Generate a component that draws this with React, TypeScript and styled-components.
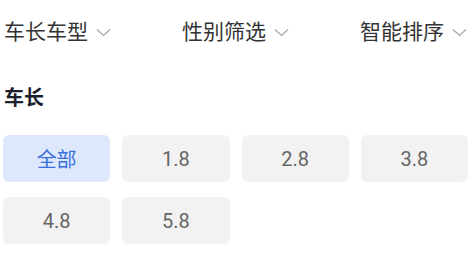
import React from 'react';
import styled, { createGlobalStyle } from 'styled-components';

const GlobalStyle = createGlobalStyle`
    body {
        margin: 0;
        background: #ffffff;
        font-family: Roboto, "Noto Sans CJK SC", sans-serif;
    }
`;

const Page = styled.div`
    width: 469px;
    padding: 0 1px 0 3px;
    box-sizing: border-box;
`;

const FilterBar = styled.div`
    display: flex;
    justify-content: space-between;
    align-items: center;
    padding: 20px 1px 0 1px;
    height: 24px;
`;

const FilterItem = styled.div`
    display: flex;
    align-items: center;
    gap: 8px;
    font-size: 21px;
    line-height: 24px;
    color: #333333;
`;

const Chevron = () => (
    <svg width="15" height="9" viewBox="0 0 15 9" fill="none">
        <path d="M1 1.5L7.5 7.5L14 1.5" stroke="#a6a6a6" strokeWidth="1.2" />
    </svg>
);

const SectionTitle = styled.h2`
    margin: 42px 0 0 1px;
    font-size: 20px;
    line-height: 24px;
    font-weight: 700;
    color: #1b1f2e;
`;

const OptionGrid = styled.div`
    display: grid;
    grid-template-columns: repeat(4, 1fr);
    column-gap: 12px;
    row-gap: 15px;
    margin-top: 25px;
`;

const Option = styled.div<{ $active?: boolean }>`
    height: 47px;
    border-radius: 6px;
    display: flex;
    align-items: center;
    justify-content: center;
    font-size: 20px;
    color: ${(p) => (p.$active ? '#3b6fd9' : '#666666')};
    background: ${(p) => (p.$active ? '#dde8fd' : '#f2f2f2')};
`;

const filters = ['车长车型', '性别筛选', '智能排序'];
const lengths = ['全部', '1.8', '2.8', '3.8', '4.8', '5.8'];

const App = () => {
    return (
        <>
            <GlobalStyle />
            <Page>
                <FilterBar>
                    {filters.map((f) => (
                        <FilterItem key={f}>
                            {f}
                            <Chevron />
                        </FilterItem>
                    ))}
                </FilterBar>
                <SectionTitle>车长</SectionTitle>
                <OptionGrid>
                    {lengths.map((l, i) => (
                        <Option key={l} $active={i === 0}>
                            {l}
                        </Option>
                    ))}
                </OptionGrid>
            </Page>
        </>
    );
};

export default App;
